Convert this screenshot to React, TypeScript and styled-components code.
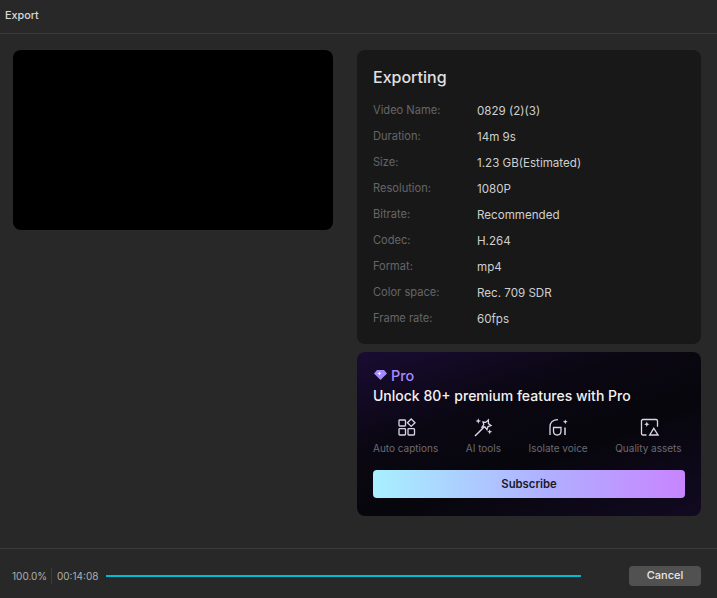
import React from 'react';
import styled, { createGlobalStyle } from 'styled-components';

const GlobalStyle = createGlobalStyle`
  html, body {
    margin: 0;
    padding: 0;
    background: #282828;
  }
  * {
    box-sizing: border-box;
  }
`;

const details = [
  ['Video Name:', '0829 (2)(3)'],
  ['Duration:', '14m 9s'],
  ['Size:', '1.23 GB(Estimated)'],
  ['Resolution:', '1080P'],
  ['Bitrate:', 'Recommended'],
  ['Codec:', 'H.264'],
  ['Format:', 'mp4'],
  ['Color space:', 'Rec. 709 SDR'],
  ['Frame rate:', '60fps'],
];

const CaptionsIcon = () => (
  <svg width="20" height="20" viewBox="0 0 20 20" fill="none" stroke="#d9d4e6" strokeWidth="1.3">
    <rect x="3" y="3" width="6.5" height="6" rx="0.8" />
    <rect x="3" y="11.7" width="6.5" height="6.3" rx="0.8" />
    <rect x="12" y="11.7" width="6.5" height="6.3" rx="0.8" />
    <path d="M15.2 2 19 5.7 15.2 9.4 11.4 5.7Z" />
  </svg>
);

const WandIcon = () => (
  <svg width="20" height="20" viewBox="0 0 20 20" fill="none" stroke="#d9d4e6" strokeWidth="1.3">
    <path d="M2 19 11.3 9.7" strokeWidth="1.5" />
    <path d="M10 5 12.6 5.4 15.4 3 15.4 6.6 18 8.6 15 9.6 14 12.6 12 10 9 10 10.8 7.6Z" />
    <path d="M5.3 1.2 6.1 3.2 8.1 4 6.1 4.8 5.3 6.8 4.5 4.8 2.5 4 4.5 3.2Z" fill="#d9d4e6" stroke="none" />
    <path d="M16.7 12.2 17.4 14 19.2 14.7 17.4 15.4 16.7 17.2 16 15.4 14.2 14.7 16 14Z" fill="#d9d4e6" stroke="none" />
  </svg>
);

const VoiceIcon = () => (
  <svg width="20" height="20" viewBox="0 0 20 20" fill="none" stroke="#d9d4e6" strokeWidth="1.3">
    <path d="M2 18V10C2 5.2 5 2.6 10 2.6" />
    <path d="M5.5 10.5H13V14C13 16.5 11.5 18 9.2 18C7 18 5.5 16.5 5.5 14Z" />
    <path d="M17 10.5V18" strokeWidth="1.5" />
    <path d="M17.3 2.4 18 4.1 19.7 4.8 18 5.5 17.3 7.2 16.6 5.5 14.9 4.8 16.6 4.1Z" fill="#d9d4e6" stroke="none" />
  </svg>
);

const AssetsIcon = () => (
  <svg width="22" height="20" viewBox="0 0 22 20" fill="none" stroke="#d9d4e6" strokeWidth="1.3">
    <path d="M9.5 18H6C5 18 4.5 17.5 4.5 16.5V4C4.5 3 5 2.5 6 2.5H19C20 2.5 20.5 3 20.5 4V9.8" />
    <path d="M16.8 11.3 21 18H12.7Z" />
    <path d="M9.8 4.6 10.6 6.5 12.5 7.3 10.6 8.1 9.8 10 9 8.1 7.1 7.3 9 6.5Z" fill="#d9d4e6" stroke="none" />
  </svg>
);

const features = [
  { label: 'Auto captions', icon: <CaptionsIcon /> },
  { label: 'AI tools', icon: <WandIcon /> },
  { label: 'Isolate voice', icon: <VoiceIcon /> },
  { label: 'Quality assets', icon: <AssetsIcon /> },
];

export default function App() {
  return (
    <Page>
      <GlobalStyle />
      <Header>Export</Header>
      <Main>
        <Preview />
        <SideColumn>
          <InfoCard>
            <InfoTitle>Exporting</InfoTitle>
            {details.map(([label, value]) => (
              <InfoRow key={label}>
                <InfoLabel>{label}</InfoLabel>
                <InfoValue>{value}</InfoValue>
              </InfoRow>
            ))}
          </InfoCard>
          <ProCard>
            <ProBadge>
              <svg width="13" height="10" viewBox="0 0 13 10">
                <path d="M3 0H10L13 3.4 6.5 10 0 3.4Z" fill="#a58bff" />
                <path d="M5.4 1.4 6 2.8 7.4 3.4 6 4 5.4 5.4 4.8 4 3.4 3.4 4.8 2.8Z" fill="#fff" />
              </svg>
              Pro
            </ProBadge>
            <ProTitle>Unlock 80+ premium features with Pro</ProTitle>
            <FeatureRow>
              {features.map((f) => (
                <Feature key={f.label}>
                  <FeatureIcon>{f.icon}</FeatureIcon>
                  <FeatureLabel>{f.label}</FeatureLabel>
                </Feature>
              ))}
            </FeatureRow>
            <SubscribeButton>Subscribe</SubscribeButton>
          </ProCard>
        </SideColumn>
      </Main>
      <Footer>
        <Percent>100.0%</Percent>
        <Elapsed>00:14:08</Elapsed>
        <Progress />
        <CancelButton>Cancel</CancelButton>
      </Footer>
    </Page>
  );
}

const Page = styled.div`
  width: 717px;
  height: 598px;
  display: flex;
  flex-direction: column;
  background: #282828;
  font-family: Inter, 'Liberation Sans', sans-serif;
  overflow: hidden;
`;

const Header = styled.div`
  height: 34px;
  flex: none;
  padding: 0 5px 2px;
  display: flex;
  align-items: center;
  font-size: 10.8px;
  font-weight: 500;
  color: #d8d8d8;
  border-bottom: 1px solid #3a3a3a;
`;

const Main = styled.div`
  flex: 1;
  display: flex;
  align-items: flex-start;
  padding: 16px 16px 0 13px;
  gap: 24px;
`;

const Preview = styled.div`
  width: 320px;
  height: 180px;
  flex: none;
  background: #000;
  border-radius: 8px;
`;

const SideColumn = styled.div`
  flex: 1;
  display: flex;
  flex-direction: column;
  gap: 8px;
`;

const InfoCard = styled.div`
  height: 294px;
  padding: 16px 16px 0;
  background: #181818;
  border-radius: 8px;
`;

const InfoTitle = styled.div`
  font-size: 16px;
  line-height: 22px;
  font-weight: 500;
  color: #e0e0e0;
  margin-bottom: 9px;
`;

const InfoRow = styled.div`
  height: 26px;
  display: flex;
  align-items: center;
`;

const InfoLabel = styled.div`
  width: 104px;
  flex: none;
  color: #666;
  font-size: 11.1px;
`;

const InfoValue = styled.div`
  margin-top: 2px;
  color: #cfcfcf;
  font-size: 11.6px;
`;

const ProCard = styled.div`
  height: 164px;
  padding: 15px 16px 0;
  border-radius: 8px;
  background: linear-gradient(160deg, #1a0c33 0%, #0a0712 35%, #07060c 60%, #120a22 100%);
`;

const ProBadge = styled.div`
  display: flex;
  align-items: center;
  gap: 4px;
  height: 16px;
  padding-left: 1px;
  font-size: 14.4px;
  font-weight: 500;
  color: #a58bff;
`;

const ProTitle = styled.div`
  margin-top: 3px;
  font-size: 14px;
  line-height: 20px;
  font-weight: 500;
  color: #f2f2f2;
`;

const FeatureRow = styled.div`
  display: flex;
  gap: 27.5px;
  margin-top: 11px;
`;

const Feature = styled.div`
  display: flex;
  flex-direction: column;
  align-items: center;
`;

const FeatureIcon = styled.div`
  height: 20px;
  display: flex;
  align-items: center;
  justify-content: center;
`;

const FeatureLabel = styled.div`
  margin-top: 4px;
  font-size: 10px;
  line-height: 14px;
  color: #6b6a72;
`;

const SubscribeButton = styled.button`
  display: block;
  width: 100%;
  height: 28px;
  margin-top: 15px;
  padding: 0;
  border: none;
  border-radius: 4px;
  background: linear-gradient(90deg, #a8f0ff 0%, #b0b0ff 55%, #c884ff 100%);
  font-family: inherit;
  font-size: 11.3px;
  font-weight: 600;
  color: #1a1a2a;
`;

const Footer = styled.div`
  height: 50px;
  flex: none;
  display: flex;
  align-items: center;
  padding: 5px 16px 0 12px;
  border-top: 1px solid #3a3a3a;
  font-size: 10px;
  color: #b0b0b0;
`;

const Percent = styled.div`
  width: 40px;
  flex: none;
  border-right: 1px solid #3d3d3d;
  line-height: 16px;
`;

const Elapsed = styled.div`
  margin-left: 5px;
  width: 49px;
  flex: none;
`;

const Progress = styled.div`
  width: 475px;
  height: 2px;
  flex: none;
  background: #00bcd0;
`;

const CancelButton = styled.button`
  width: 72px;
  height: 20px;
  margin-left: auto;
  padding: 0 0 2px;
  border: none;
  border-radius: 4px;
  background: #515151;
  font-family: inherit;
  font-size: 11px;
  font-weight: 500;
  color: #e8e8e8;
`;
